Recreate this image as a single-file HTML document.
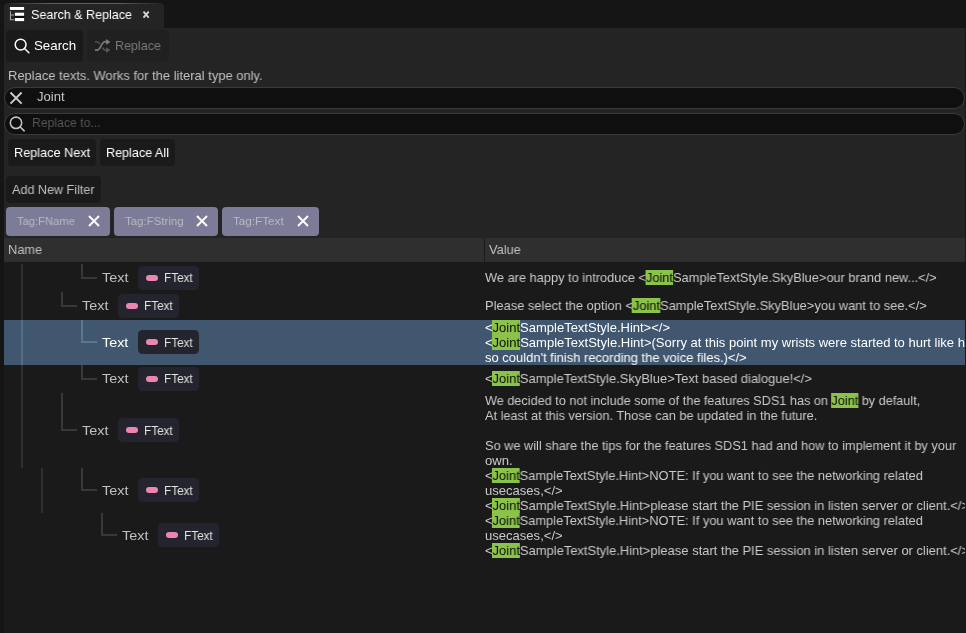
<!DOCTYPE html>
<html>
<head>
<meta charset="utf-8">
<style>
html,body{margin:0;padding:0;}
body{width:966px;height:633px;overflow:hidden;background:#151515;font-family:"Liberation Sans",sans-serif;position:relative;color:#c0c0c0;font-size:13px;}
.abs{position:absolute;}
#panel{left:4px;top:28px;width:961px;height:605px;background:#242424;}
#edge{left:965px;top:28px;width:1px;height:605px;background:#1a1a1a;}
#tab{left:4px;top:3px;width:160px;height:26px;background:#242424;border-radius:4px 4px 0 0;}
#tabline{left:6px;top:3px;width:156px;height:1px;background:linear-gradient(90deg,rgba(0,112,224,0) 0%,#0a70dc 28%,#0a70dc 72%,rgba(0,112,224,0) 100%);}
.t{position:absolute;white-space:nowrap;line-height:16px;transform-origin:0 50%;will-change:transform;}
.btn{position:absolute;background:#1a1a1a;border-radius:4px;}
.inp{position:absolute;left:4px;width:961px;background:#0f0f0f;border:1px solid #3a3a3a;border-radius:11px;box-sizing:border-box;}
.tag{position:absolute;top:207px;height:29px;background:#7c7c98;border-radius:4px;}
#hdr{left:4px;top:238px;width:961px;height:24px;background:#2f2f2f;}
#tbl{left:4px;top:262px;width:962px;height:371px;background:#1a1a1a;}
#sel{left:4px;top:320px;width:961px;height:45px;background:#40576f;}
#clip{left:4px;top:262px;width:961px;height:371px;overflow:hidden;}
.pill{position:absolute;width:61px;height:24px;background:#24242e;border-radius:4.5px;}
.pill i{position:absolute;left:8px;top:9.3px;width:12px;height:6px;border-radius:3px;background:#ee84b1;}
.vl{position:absolute;width:1.7px;background:#383838;}
.vl.m{background:#2f2f2f;width:1.8px;}
.vl.m.s{background:#546d87;}
.hl{position:absolute;height:1.7px;background:#383838;}
.s .vl,.s .hl{background:#5d7690;}
.v{position:absolute;white-space:nowrap;line-height:15px;transform-origin:0 50%;will-change:transform;}
.v em{font-style:normal;background:#8bc24a;color:#0c0f08;padding-left:0.8px;margin-left:-0.8px;}
</style>
</head>
<body>
<div class="abs" id="panel"></div>
<div class="abs" id="edge"></div>
<div class="abs" id="tab"></div>
<div class="abs" id="tabline"></div>
<svg class="abs" style="left:9px;top:6px" width="17" height="16" viewBox="0 0 17 16">
 <rect x="5.4" y="9.6" width="10" height="2.6" fill="#0c0c0c"/>
 <rect x="0.9" y="1" width="14.2" height="2.95" fill="#fff"/>
 <rect x="5.9" y="6.7" width="9.2" height="3.1" fill="#fff"/>
 <rect x="5.9" y="12" width="9.2" height="3.1" fill="#fff"/>
 <path d="M1.45 5.2V13.65H5M1.45 8.9H5" fill="none" stroke="#a4a4a4" stroke-width="1.05"/>
</svg>
<div class="t" id="t_tab" style="left:31.26px;top:6.70px;font-size:13px;color:#fff;transform:scaleX(0.9640);">Search &amp; Replace</div>
<svg class="abs" style="left:141px;top:10px" width="10" height="10" viewBox="0 0 10 10"><path d="M2.5 1.6L7.7 7.7M7.7 1.6L2.5 7.7" stroke="#d6d6d6" stroke-width="1.8" fill="none"/></svg>
<div class="btn" style="left:6px;top:30px;width:77px;height:32px;"></div>
<svg class="abs" style="left:13px;top:36px" width="18" height="18" viewBox="0 0 18 18"><circle cx="7.6" cy="8.6" r="5.4" fill="none" stroke="#fff" stroke-width="1.5"/><path d="M11.5 12.5L15.9 16.8" stroke="#fff" stroke-width="1.5" stroke-linecap="round"/></svg>
<div class="t" id="t_search" style="left:33.70px;top:37.80px;font-size:13px;color:#fff;transform:scaleX(1.0232);">Search</div>
<div class="btn" style="left:87px;top:30px;width:82px;height:32px;background:#202020;"></div>
<svg class="abs" style="left:94px;top:37px" width="18" height="18" viewBox="0 0 18 18">
 <path d="M0.9 4.7H2.8C4.4 4.7 5.3 5.9 6 7.1M8.3 10.6C9.1 12 9.9 13.1 11.4 13.1H12.6" fill="none" stroke="#515151" stroke-width="1.6"/>
 <path d="M12.1 10.2L16.4 13.1L12.1 16Z" fill="#5a5a5a"/>
 <path d="M0.9 13.1H3.2C6.6 13.1 7.4 4.7 11.2 4.7H12.6" fill="none" stroke="#7a7a7a" stroke-width="1.7"/>
 <path d="M12.1 1.9L16.4 4.9L12.1 7.7Z" fill="#828282"/>
</svg>
<div class="t" id="t_replace" style="left:115.43px;top:37.80px;font-size:13px;color:#7a7a7a;transform:scaleX(0.9631);">Replace</div>
<div class="t" id="t_desc" style="left:7.65px;top:67.70px;font-size:13px;color:#c0c0c0;transform:scaleX(0.9943);">Replace texts. Works for the literal type only.</div>
<div class="inp" style="top:87px;height:22px;"></div>
<svg class="abs" style="left:9px;top:91px" width="14" height="14" viewBox="0 0 14 14"><path d="M1.5 1.5L12.6 12.6M12.6 1.5L1.5 12.6" stroke="#cdcdcd" stroke-width="1.9" fill="none"/></svg>
<div class="t" id="t_joint" style="left:37.28px;top:88.50px;font-size:13px;color:#c6c6c6;transform:scaleX(1.0065);">Joint</div>
<div class="inp" style="top:113px;height:22px;"></div>
<svg class="abs" style="left:8px;top:115px" width="18" height="18" viewBox="0 0 18 18"><circle cx="8" cy="7.8" r="5.7" fill="none" stroke="#c4c4c4" stroke-width="1.6"/><path d="M12.2 12L16.2 15.8" stroke="#c4c4c4" stroke-width="1.6" stroke-linecap="round"/></svg>
<div class="t" id="t_repto" style="left:32.24px;top:115.10px;font-size:13px;color:#565656;transform:scaleX(0.9392);">Replace to...</div>
<div class="btn" style="left:8px;top:139px;width:88px;height:27px;"></div>
<div class="t" id="t_rn" style="left:14.36px;top:145.10px;font-size:13px;color:#fff;transform:scaleX(0.9759);">Replace Next</div>
<div class="btn" style="left:100px;top:139px;width:75px;height:27px;"></div>
<div class="t" id="t_ra" style="left:106.09px;top:145.10px;font-size:13px;color:#fff;transform:scaleX(0.9678);">Replace All</div>
<div class="btn" style="left:6px;top:176px;width:95px;height:27px;"></div>
<div class="t" id="t_anf" style="left:12.38px;top:181.90px;font-size:13px;color:#c0c0c0;transform:scaleX(0.9678);">Add New Filter</div>
<div class="tag" style="left:6px;width:104px;"></div>
<div class="t" id="t_tag1" style="left:17.22px;top:213.25px;font-size:11.7px;color:#b9b9c0;transform:scaleX(0.9569);">Tag:FName</div>
<svg class="abs" style="left:88px;top:215px" width="12" height="12" viewBox="0 0 12 12"><path d="M1 1L11 11M11 1L1 11" stroke="#fff" stroke-width="1.9" fill="none"/></svg>
<div class="tag" style="left:114px;width:104px;"></div>
<div class="t" id="t_tag2" style="left:125.28px;top:213.25px;font-size:11.7px;color:#b9b9c0;transform:scaleX(0.9811);">Tag:FString</div>
<svg class="abs" style="left:196px;top:215px" width="12" height="12" viewBox="0 0 12 12"><path d="M1 1L11 11M11 1L1 11" stroke="#fff" stroke-width="1.9" fill="none"/></svg>
<div class="tag" style="left:222px;width:97px;"></div>
<div class="t" id="t_tag3" style="left:233.00px;top:213.25px;font-size:11.7px;color:#b9b9c0;transform:scaleX(1.0000);">Tag:FText</div>
<svg class="abs" style="left:297px;top:215px" width="12" height="12" viewBox="0 0 12 12"><path d="M1 1L11 11M11 1L1 11" stroke="#fff" stroke-width="1.9" fill="none"/></svg>
<div class="abs" id="hdr"></div>
<div class="abs" style="left:484px;top:238px;width:1px;height:24px;background:#1a1a1a;"></div>
<div class="t" id="t_name" style="left:7.54px;top:241.70px;font-size:13px;color:#c0c0c0;transform:scaleX(0.9834);">Name</div>
<div class="t" id="t_value" style="left:489.28px;top:241.60px;font-size:13px;color:#c0c0c0;transform:scaleX(0.9845);">Value</div>
<div class="abs" id="tbl"></div>
<div class="abs" id="sel"></div>
<div class="vl m" style="left:21.1px;top:264px;height:204px;"></div>
<div class="vl m s" style="left:21.1px;top:320px;height:45px;"></div>
<div class="vl m" style="left:41.1px;top:468px;height:45px;"></div>
<div class=""><div class="vl" style="left:81.4px;top:264px;height:14.6px;"></div><div class="hl" style="left:81.4px;top:276.9px;width:15.4px;"></div></div>
<div class="t" id="n1" style="left:102.16px;top:270.10px;font-size:13px;color:#c0c0c0;transform:scaleX(1.1093);">Text</div>
<div class="pill" style="left:138.0px;top:266px;"><i></i></div>
<div class="t" id="f1" style="left:163.60px;top:270.17px;font-size:12.5px;color:#e4e4e4;transform:scaleX(0.9411);">FText</div>
<div class=""><div class="vl" style="left:61.4px;top:292px;height:14.6px;"></div><div class="hl" style="left:61.4px;top:304.9px;width:15.4px;"></div></div>
<div class="t" id="n2" style="left:82.16px;top:298.10px;font-size:13px;color:#c0c0c0;transform:scaleX(1.1093);">Text</div>
<div class="pill" style="left:118.0px;top:294px;"><i></i></div>
<div class="t" id="f2" style="left:143.60px;top:298.17px;font-size:12.5px;color:#e4e4e4;transform:scaleX(0.9411);">FText</div>
<div class="s"><div class="vl" style="left:81.4px;top:320px;height:22.6px;"></div><div class="hl" style="left:81.4px;top:340.9px;width:15.4px;"></div></div>
<div class="t" id="n3" style="left:102.40px;top:335.10px;font-size:13px;color:#fff;transform:scaleX(1.1029);">Text</div>
<div class="pill" style="left:138.0px;top:330px;"><i></i></div>
<div class="t" id="f3" style="left:163.60px;top:335.17px;font-size:12.5px;color:#e4e4e4;transform:scaleX(0.9411);">FText</div>
<div class=""><div class="vl" style="left:81.4px;top:365px;height:14.6px;"></div><div class="hl" style="left:81.4px;top:377.9px;width:15.4px;"></div></div>
<div class="t" id="n4" style="left:102.16px;top:371.10px;font-size:13px;color:#c0c0c0;transform:scaleX(1.1093);">Text</div>
<div class="pill" style="left:138.0px;top:367px;"><i></i></div>
<div class="t" id="f4" style="left:163.60px;top:371.17px;font-size:12.5px;color:#e4e4e4;transform:scaleX(0.9411);">FText</div>
<div class=""><div class="vl" style="left:61.4px;top:393px;height:37.6px;"></div><div class="hl" style="left:61.4px;top:428.9px;width:15.4px;"></div></div>
<div class="t" id="n5" style="left:82.16px;top:423.10px;font-size:13px;color:#c0c0c0;transform:scaleX(1.1093);">Text</div>
<div class="pill" style="left:118.0px;top:418px;"><i></i></div>
<div class="t" id="f5" style="left:143.60px;top:423.17px;font-size:12.5px;color:#e4e4e4;transform:scaleX(0.9411);">FText</div>
<div class=""><div class="vl" style="left:81.4px;top:468px;height:22.6px;"></div><div class="hl" style="left:81.4px;top:488.9px;width:15.4px;"></div></div>
<div class="t" id="n6" style="left:102.16px;top:483.10px;font-size:13px;color:#c0c0c0;transform:scaleX(1.1093);">Text</div>
<div class="pill" style="left:138.0px;top:478px;"><i></i></div>
<div class="t" id="f6" style="left:163.60px;top:483.17px;font-size:12.5px;color:#e4e4e4;transform:scaleX(0.9411);">FText</div>
<div class=""><div class="vl" style="left:101.4px;top:513px;height:22.6px;"></div><div class="hl" style="left:101.4px;top:533.9px;width:15.4px;"></div></div>
<div class="t" id="n7" style="left:122.16px;top:528.10px;font-size:13px;color:#c0c0c0;transform:scaleX(1.1093);">Text</div>
<div class="pill" style="left:158.0px;top:523px;"><i></i></div>
<div class="t" id="f7" style="left:183.60px;top:528.17px;font-size:12.5px;color:#e4e4e4;transform:scaleX(0.9411);">FText</div>
<div class="abs" id="clip">
<div class="v" id="v1" style="left:481.23px;top:8.30px;font-size:13px;color:#cacaca;transform:scaleX(0.9848);">We are happy to introduce &lt;<em>Joint</em>SampleTextStyle.SkyBlue&gt;our brand new...&lt;/&gt;</div>
<div class="v" id="v2" style="left:480.65px;top:36.30px;font-size:13px;color:#cacaca;transform:scaleX(0.9908);">Please select the option &lt;<em>Joint</em>SampleTextStyle.SkyBlue&gt;you want to see.&lt;/&gt;</div>
<div class="v" id="v3" style="left:481.00px;top:58.30px;font-size:13px;color:#fff;transform:scaleX(1.0000);">&lt;<em>Joint</em>SampleTextStyle.Hint&gt;&lt;/&gt;</div>
<div class="v" id="v4" style="left:481.10px;top:73.30px;font-size:13px;color:#fff;transform:scaleX(1.0019);">&lt;<em>Joint</em>SampleTextStyle.Hint&gt;(Sorry at this point my wrists were started to hurt like hell</div>
<div class="v" id="v5" style="left:481.23px;top:88.30px;font-size:13px;color:#fff;transform:scaleX(0.9963);">so couldn't finish recording the voice files.)&lt;/&gt;</div>
<div class="v" id="v6" style="left:481.14px;top:109.30px;font-size:13px;color:#cacaca;transform:scaleX(0.9943);">&lt;<em>Joint</em>SampleTextStyle.SkyBlue&gt;Text based dialogue!&lt;/&gt;</div>
<div class="v" id="v7" style="left:481.48px;top:131.30px;font-size:13px;color:#cacaca;transform:scaleX(0.9750);">We decided to not include some of the features SDS1 has on <em>Joint</em> by default,</div>
<div class="v" id="v8" style="left:481.37px;top:146.30px;font-size:13px;color:#cacaca;transform:scaleX(0.9790);">At least at this version. Those can be updated in the future.</div>
<div class="v" id="v9" style="left:480.75px;top:176.30px;font-size:13px;color:#cacaca;transform:scaleX(0.9806);">So we will share the tips for the features SDS1 had and how to implement it by your</div>
<div class="v" id="v10" style="left:481.24px;top:191.30px;font-size:13px;color:#cacaca;transform:scaleX(1.0088);">own.</div>
<div class="v" id="v11" style="left:481.43px;top:206.30px;font-size:13px;color:#cacaca;transform:scaleX(0.9885);">&lt;<em>Joint</em>SampleTextStyle.Hint&gt;NOTE: If you want to see the networking related</div>
<div class="v" id="v12" style="left:481.10px;top:221.30px;font-size:13px;color:#cacaca;transform:scaleX(1.0039);">usecases,&lt;/&gt;</div>
<div class="v" id="v13" style="left:481.10px;top:236.30px;font-size:13px;color:#cacaca;transform:scaleX(0.9951);">&lt;<em>Joint</em>SampleTextStyle.Hint&gt;please start the PIE session in listen server or client.&lt;/&gt;</div>
<div class="v" id="v14" style="left:481.43px;top:251.30px;font-size:13px;color:#cacaca;transform:scaleX(0.9885);">&lt;<em>Joint</em>SampleTextStyle.Hint&gt;NOTE: If you want to see the networking related</div>
<div class="v" id="v15" style="left:481.10px;top:266.30px;font-size:13px;color:#cacaca;transform:scaleX(1.0039);">usecases,&lt;/&gt;</div>
<div class="v" id="v16" style="left:481.10px;top:281.30px;font-size:13px;color:#cacaca;transform:scaleX(0.9951);">&lt;<em>Joint</em>SampleTextStyle.Hint&gt;please start the PIE session in listen server or client.&lt;/&gt;</div>
</div>
<div class="abs" style="left:965px;top:262px;width:1px;height:371px;background:#1a1a1a;"></div>
</body>
</html>
